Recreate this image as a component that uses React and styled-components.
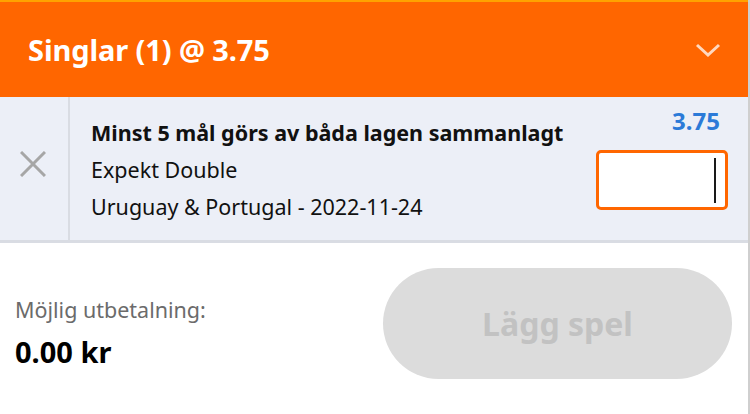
import React from 'react';
import styled, { createGlobalStyle } from 'styled-components';

const GlobalStyle = createGlobalStyle`
  html, body {
    margin: 0;
    padding: 0;
    background: #fff;
    font-family: "Noto Sans", "Open Sans", sans-serif;
  }
  * { box-sizing: border-box; }
`;

const Slip = styled.div`
  width: 750px;
  height: 414px;
  border-right: 2px solid #cfcfcf;
  display: flex;
  flex-direction: column;
  overflow: hidden;
`;

const Header = styled.div`
  height: 97px;
  flex-shrink: 0;
  border-top: 2px solid #ffa200;
  background: #ff6600;
  display: flex;
  align-items: center;
  justify-content: space-between;
  padding: 0 27px 0 28px;
  color: #fff;
`;

const Title = styled.h1`
  margin: 0;
  font-size: 29px;
  font-weight: 700;
  letter-spacing: -0.1px;
`;

const Chevron = styled.svg`
  width: 26px;
  height: 14px;
  opacity: 0.75;
`;

const BetRow = styled.div`
  display: flex;
  height: 146px;
  flex-shrink: 0;
  background: #eceff7;
  border-bottom: 3px solid #d9dce3;
`;

const RemoveCell = styled.button`
  width: 70px;
  border: none;
  border-right: 2px solid #d9dce3;
  background: transparent;
  display: flex;
  align-items: center;
  justify-content: center;
  padding: 0 2px 10px 0;
`;

const BetInfo = styled.div`
  flex: 1;
  padding: 17px 0 0 21px;
  display: flex;
  flex-direction: column;
  font-size: 21.5px;
  color: #111;
`;

const Line = styled.div`
  line-height: 37px;
  font-weight: ${(p) => (p.$bold ? 700 : 400)};
  white-space: nowrap;
`;

const StakeCol = styled.div`
  width: 160px;
  padding: 10px 20px 0 0;
  display: flex;
  flex-direction: column;
  align-items: flex-end;
`;

const Odds = styled.div`
  font-size: 24px;
  font-weight: 700;
  color: #2b7ad8;
  line-height: 28px;
  margin-right: 8px;
`;

const StakeInput = styled.div`
  margin-top: 15px;
  width: 132px;
  height: 60px;
  border: 3px solid #ff6600;
  border-radius: 5px;
  background: #fff;
  display: flex;
  justify-content: flex-end;
  align-items: center;
  padding-right: 9px;
`;

const Caret = styled.span`
  width: 2px;
  height: 45px;
  background: #1a1a1a;
`;

const Footer = styled.div`
  flex: 1;
  display: flex;
  align-items: center;
  justify-content: space-between;
  padding: 0 16px 12px 15px;
`;

const Payout = styled.div`
  display: flex;
  flex-direction: column;
  gap: 9px;
  padding-top: 20px;
`;

const PayoutLabel = styled.div`
  font-size: 21.5px;
  color: #6b6b6b;
  line-height: 30px;
`;

const PayoutValue = styled.div`
  font-size: 29px;
  font-weight: 700;
  color: #000;
  line-height: 36px;
`;

const PlaceButton = styled.button`
  width: 349px;
  height: 111px;
  border: none;
  border-radius: 56px;
  background: #dcdcdc;
  color: #c2c2c2;
  font-family: inherit;
  font-size: 32px;
  font-weight: 700;
  margin-top: 2px;
`;

const App = () => (
  <>
    <GlobalStyle />
    <Slip>
      <Header>
        <Title>Singlar (1) @ 3.75</Title>
        <Chevron viewBox="0 0 26 14" fill="none">
          <path d="M2 2l11 10L24 2" stroke="#fff" strokeWidth="3" />
        </Chevron>
      </Header>
      <BetRow>
        <RemoveCell aria-label="Ta bort">
          <svg width="26" height="26" viewBox="0 0 26 26">
            <path d="M1 1l24 24M25 1L1 25" stroke="#a6a6a6" strokeWidth="3" />
          </svg>
        </RemoveCell>
        <BetInfo>
          <Line $bold>Minst 5 mål görs av båda lagen sammanlagt</Line>
          <Line>Expekt Double</Line>
          <Line>Uruguay &amp; Portugal - 2022-11-24</Line>
        </BetInfo>
        <StakeCol>
          <Odds>3.75</Odds>
          <StakeInput>
            <Caret />
          </StakeInput>
        </StakeCol>
      </BetRow>
      <Footer>
        <Payout>
          <PayoutLabel>Möjlig utbetalning:</PayoutLabel>
          <PayoutValue>0.00 kr</PayoutValue>
        </Payout>
        <PlaceButton disabled>Lägg spel</PlaceButton>
      </Footer>
    </Slip>
  </>
);

export default App;
